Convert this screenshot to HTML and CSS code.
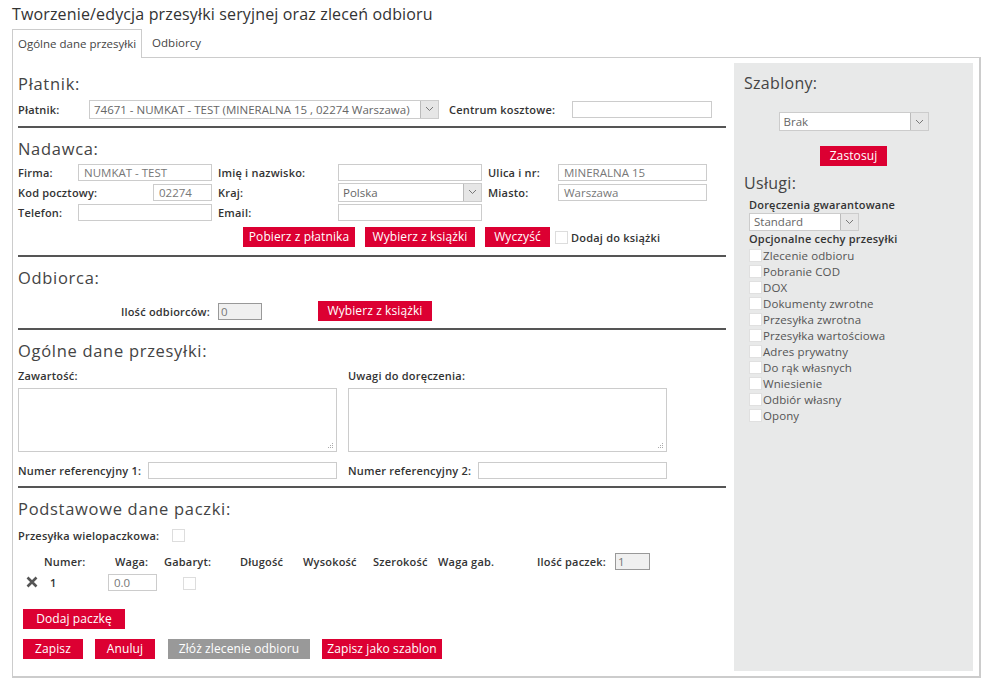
FILE: index.html
```html
<!DOCTYPE html>
<html lang="pl">
<head>
<meta charset="utf-8">
<title>Tworzenie/edycja przesyłki seryjnej</title>
<link rel="stylesheet" href="styles.css">
</head>
<body>
<h1 class="title">Tworzenie/edycja przesyłki seryjnej oraz zleceń odbioru</h1>
<div class="tabs">
  <div class="tab active">Ogólne dane przesyłki</div>
  <div class="tab">Odbiorcy</div>
</div>
<div class="panel">
  <div class="main">
    <section class="sec sec-platnik">
      <h2 class="h">Płatnik:</h2>
      <div class="row">
        <label class="lbl w71">Płatnik:</label>
        <div class="select w350"><span class="sv">74671 - NUMKAT - TEST (MINERALNA 15 , 02274 Warszawa)</span><span class="arr"><svg width="9" height="6" viewBox="0 0 9 6"><path d="M1 1l3.5 3.5L8 1" fill="none" stroke="#777" stroke-width="1"/></svg></span></div>
        <label class="lbl ml10 w123">Centrum kosztowe:</label>
        <div class="inp w140"></div>
      </div>
    </section>
    <section class="sec sec-nadawca">
      <h2 class="h">Nadawca:</h2>
      <div class="rows3">
        <div class="row">
          <label class="lbl w60">Firma:</label>
          <div class="inp w134">NUMKAT - TEST</div>
          <label class="lbl ml6 w120">Imię i nazwisko:</label>
          <div class="inp w144"></div>
          <label class="lbl ml6 w70">Ulica i nr:</label>
          <div class="inp w149">MINERALNA 15</div>
        </div>
        <div class="row">
          <label class="lbl w135">Kod pocztowy:</label>
          <div class="inp w59">02274</div>
          <label class="lbl ml6 w120">Kraj:</label>
          <div class="select w144"><span class="sv">Polska</span><span class="arr"><svg width="9" height="6" viewBox="0 0 9 6"><path d="M1 1l3.5 3.5L8 1" fill="none" stroke="#777" stroke-width="1"/></svg></span></div>
          <label class="lbl ml6 w70">Miasto:</label>
          <div class="inp w149">Warszawa</div>
        </div>
        <div class="row">
          <label class="lbl w60">Telefon:</label>
          <div class="inp w134"></div>
          <label class="lbl ml6 w120">Email:</label>
          <div class="inp w144"></div>
        </div>
      </div>
      <div class="btnrow">
        <button class="btn b112">Pobierz z płatnika</button>
        <button class="btn b110">Wybierz z książki</button>
        <button class="btn b65">Wyczyść</button>
        <span class="chk"></span><span class="lbl">Dodaj do książki</span>
      </div>
    </section>
    <section class="sec sec-odbiorca">
      <h2 class="h">Odbiorca:</h2>
      <div class="row odb">
        <label class="lbl w192 right">Ilość odbiorców:</label>
        <div class="inp ro w44 ml8">0</div>
        <button class="btn b114 btn-odb">Wybierz z książki</button>
      </div>
    </section>
    <section class="sec sec-ogolne">
      <h2 class="h">Ogólne dane przesyłki:</h2>
      <div class="cols2">
        <div class="col">
          <label class="lbl">Zawartość:</label>
          <div class="ta"><svg class="grip" width="7" height="7" viewBox="0 0 7 7"><g fill="#aaa"><rect x="5" y="1" width="1" height="1"/><rect x="3" y="3" width="1" height="1"/><rect x="5" y="3" width="1" height="1"/><rect x="1" y="5" width="1" height="1"/><rect x="3" y="5" width="1" height="1"/><rect x="5" y="5" width="1" height="1"/></g></svg></div>
          <div class="row">
            <label class="lbl w130">Numer referencyjny 1:</label>
            <div class="inp w189"></div>
          </div>
        </div>
        <div class="col">
          <label class="lbl">Uwagi do doręczenia:</label>
          <div class="ta"><svg class="grip" width="7" height="7" viewBox="0 0 7 7"><g fill="#aaa"><rect x="5" y="1" width="1" height="1"/><rect x="3" y="3" width="1" height="1"/><rect x="5" y="3" width="1" height="1"/><rect x="1" y="5" width="1" height="1"/><rect x="3" y="5" width="1" height="1"/><rect x="5" y="5" width="1" height="1"/></g></svg></div>
          <div class="row">
            <label class="lbl w130">Numer referencyjny 2:</label>
            <div class="inp w189"></div>
          </div>
        </div>
      </div>
    </section>
    <section class="sec sec-paczki">
      <h2 class="h">Podstawowe dane paczki:</h2>
      <div class="row multi">
        <label class="lbl w154">Przesyłka wielopaczkowa:</label>
        <span class="chk"></span>
      </div>
      <div class="thead">
        <span class="lbl c1">Numer:</span>
        <span class="lbl c2">Waga:</span>
        <span class="lbl c3">Gabaryt:</span>
        <span class="lbl c4">Długość</span>
        <span class="lbl c5">Wysokość</span>
        <span class="lbl c6">Szerokość</span>
        <span class="lbl c7">Waga gab.</span>
        <span class="lbl c8">Ilość paczek:</span>
        <div class="inp ro w35">1</div>
      </div>
      <div class="trow">
        <svg class="del" width="12" height="12" viewBox="0 0 12 12"><path d="M1.5 1.5l9 9M10.5 1.5l-9 9" stroke="#555" stroke-width="2.6" stroke-linecap="butt"/></svg>
        <span class="lbl num">1</span>
        <div class="inp w49">0.0</div>
        <span class="chk gab"></span>
      </div>
      <div class="add"><button class="btn b102">Dodaj paczkę</button></div>
      <div class="actions">
        <button class="btn b60">Zapisz</button>
        <button class="btn b60">Anuluj</button>
        <button class="btn gray b142">Złóż zlecenie odbioru</button>
        <button class="btn b120">Zapisz jako szablon</button>
      </div>
    </section>
  </div>
  <aside class="side">
    <h2 class="h">Szablony:</h2>
    <div class="tpl">
      <div class="select w150 tall"><span class="sv">Brak</span><span class="arr"><svg width="9" height="6" viewBox="0 0 9 6"><path d="M1 1l3.5 3.5L8 1" fill="none" stroke="#777" stroke-width="1"/></svg></span></div>
      <button class="btn b67">Zastosuj</button>
    </div>
    <h2 class="h">Usługi:</h2>
    <div class="svc">
      <div class="lbl">Doręczenia gwarantowane</div>
      <div class="select w110"><span class="sv">Standard</span><span class="arr"><svg width="9" height="6" viewBox="0 0 9 6"><path d="M1 1l3.5 3.5L8 1" fill="none" stroke="#777" stroke-width="1"/></svg></span></div>
      <div class="lbl">Opcjonalne cechy przesyłki</div>
      <ul class="opts">
        <li><span class="chk"></span>Zlecenie odbioru</li>
        <li><span class="chk"></span>Pobranie COD</li>
        <li><span class="chk"></span>DOX</li>
        <li><span class="chk"></span>Dokumenty zwrotne</li>
        <li><span class="chk"></span>Przesyłka zwrotna</li>
        <li><span class="chk"></span>Przesyłka wartościowa</li>
        <li><span class="chk"></span>Adres prywatny</li>
        <li><span class="chk"></span>Do rąk własnych</li>
        <li><span class="chk"></span>Wniesienie</li>
        <li><span class="chk"></span>Odbiór własny</li>
        <li><span class="chk"></span>Opony</li>
      </ul>
    </div>
  </aside>
</div>
</body>
</html>
```
FILE: styles.css
```css
* { box-sizing: border-box; }
html, body { margin: 0; padding: 0; background: #fff; }
body {
  font-family: "Open Sans", "DejaVu Sans", sans-serif;
  color: #333;
  width: 991px;
  height: 685px;
  overflow: hidden;
}
.title {
  margin: 0;
  padding: 4px 0 0 12px;
  height: 28px;
  font-size: 16px;
  font-weight: 400;
  letter-spacing: 0.15px;
  color: #333;
  line-height: 20px;
}
.tabs {
  display: flex;
  margin-left: 12px;
  height: 29px;
}
.tab {
  font-size: 11.5px;
  color: #444;
  padding: 0 10px;
  line-height: 29px;
}
.tab.active {
  border: 1px solid #ccc;
  border-bottom: none;
  background: #fff;
  position: relative;
  top: 1px;
  z-index: 1;
  padding: 0 5px;
  height: 29px;
  line-height: 27px;
}
.panel {
  margin-left: 12px;
  width: 969px;
  height: 621px;
  border: 1px solid #ccc;
  border-bottom-width: 2px;
  border-right-width: 2px;
  padding: 5px;
  display: flex;
  gap: 8px;
}
.main { width: 708px; }
.side {
  width: 239px;
  background: #e8e9e9;
  padding: 10px 10px 0 10px;
}
.sec { border-bottom: 2px solid #555; }
.sec:last-child { border-bottom: none; }
.h {
  margin: 0;
  font-size: 16.5px;
  font-weight: 500;
  letter-spacing: 0.7px;
  color: #444;
  line-height: 20px;
}
.side .h { font-size: 16px; letter-spacing: 0.3px; }
.lbl {
  font-size: 11px;
  font-weight: 600;
  letter-spacing: 0.2px;
  color: #333;
  white-space: nowrap;
  display: inline-block;
}
.row { display: flex; align-items: center; height: 20px; }
.right { text-align: right; }
.ml6 { margin-left: 6px; }
.ml8 { margin-left: 8px; }
.ml10 { margin-left: 10px; }
.w35 { width: 35px; } .w44 { width: 44px; } .w49 { width: 49px; } .w59 { width: 59px; }
.w60 { width: 60px; } .w70 { width: 70px; } .w71 { width: 71px; } .w110 { width: 110px; }
.w120 { width: 120px; } .w123 { width: 123px; } .w130 { width: 130px; } .w134 { width: 134px; }
.w135 { width: 135px; } .w140 { width: 140px; } .w144 { width: 144px; } .w149 { width: 149px; }
.w150 { width: 150px; } .w154 { width: 154px; } .w189 { width: 189px; } .w192 { width: 192px; } .w350 { width: 350px; }
.inp {
  height: 17px;
  border: 1px solid #ccc;
  background: #fff;
  font-size: 11.5px;
  color: #777;
  padding-left: 5px;
  line-height: 15px;
  white-space: nowrap;
  overflow: hidden;
}
.inp.ro { background: #f0f0f0; border-color: #999; padding-left: 2px; }
.select {
  height: 19px;
  border: 1px solid #ccc;
  background: #fff;
  display: flex;
  font-size: 11.5px;
  color: #666;
}
.select .sv { flex: 1; padding-left: 4px; line-height: 17px; white-space: nowrap; overflow: hidden; }
.select .arr {
  width: 18px;
  background: #e6e6e6;
  border-left: 1px solid #bbb;
  display: flex;
  align-items: center;
  justify-content: center;
}
.btn {
  font-family: inherit;
  border: none;
  background: #dc0032;
  color: #fff;
  font-size: 12px;
  letter-spacing: 0.1px;
  height: 20px;
  padding: 0;
  line-height: 20px;
  text-align: center;
  cursor: pointer;
  white-space: nowrap;
  flex: none;
}
.btn.gray { background: #999; }
.b60 { width: 60px; } .b65 { width: 65px; } .b67 { width: 67px; } .b102 { width: 102px; }
.b110 { width: 110px; } .b112 { width: 112px; } .b114 { width: 114px; } .b120 { width: 120px; } .b142 { width: 142px; }
.chk {
  display: inline-block;
  width: 13px;
  height: 13px;
  border: 1px solid #ddd;
  background: #fff;
  flex: none;
}
/* Płatnik */
.sec-platnik { padding-top: 11px; height: 65px; }
.sec-platnik .h { margin-bottom: 5px; }
/* Nadawca */
.sec-nadawca { padding-top: 11px; height: 129px; }
.sec-nadawca .h { margin-bottom: 3px; }
.btnrow { display: flex; align-items: center; margin: 5px 0 0 225px; height: 20px; }
.btnrow .btn { margin-right: 10px; }
.btnrow .chk { margin-left: -5px; margin-right: 3px; }
/* Odbiorca */
.sec-odbiorca { padding-top: 11px; height: 73px; }
.odb { margin-top: 13px; }
.btn-odb { margin-left: 56px; }
/* Ogólne */
.sec-ogolne { padding-top: 11px; height: 158px; }
.cols2 { display: flex; gap: 11px; margin-top: 5px; }
.col { width: 319px; }
.col > .lbl { display: block; height: 20px; line-height: 20px; }
.ta {
  height: 64px;
  border: 1px solid #ccc;
  position: relative;
  margin: 2px 0 8px;
}
.grip { position: absolute; right: 2px; bottom: 2px; }
/* Paczki */
.sec-paczki { padding-top: 11px; }
.multi { margin-top: 6px; }
.thead { display: flex; align-items: center; margin-top: 6px; height: 20px; padding-left: 26px; }
.thead .c1 { width: 71px; }
.thead .c2 { width: 49px; }
.thead .c3 { width: 76px; }
.thead .c4 { width: 63px; }
.thead .c5 { width: 70px; }
.thead .c6 { width: 65px; }
.thead .c7 { width: 99px; }
.thead .c8 { width: 78px; }
.trow { display: flex; align-items: center; height: 20px; padding-left: 8px; margin-top: 1px; }
.del { flex: none; }
.num { margin-left: 12px; width: 58px; }
.gab { margin-left: 26px; margin-top: 3px; }
.add { margin-top: 14px; padding-left: 5px; }
.actions { display: flex; margin-top: 10px; padding-left: 5px; }
.actions .btn { margin-right: 12px; }
.actions .btn:nth-child(2) { margin-right: 13px; }
/* Side */
.tpl { display: flex; flex-direction: column; align-items: center; margin-top: 19px; gap: 15px; margin-bottom: 7px; }
.svc { padding-left: 5px; margin-top: 5px; }
.svc > .lbl { display: block; line-height: 14px; }
.svc .select { height: 18px; margin: 1px 0 1px; }
.svc .select .sv { line-height: 16px; }
.opts { list-style: none; margin: 1px 0 0; padding: 0; }
.opts li {
  display: flex;
  align-items: center;
  height: 16px;
  font-size: 11.5px;
  letter-spacing: 0.1px;
  color: #555;
}
.opts .chk { margin-right: 1px; border-color: #e0e0e0; }
```
